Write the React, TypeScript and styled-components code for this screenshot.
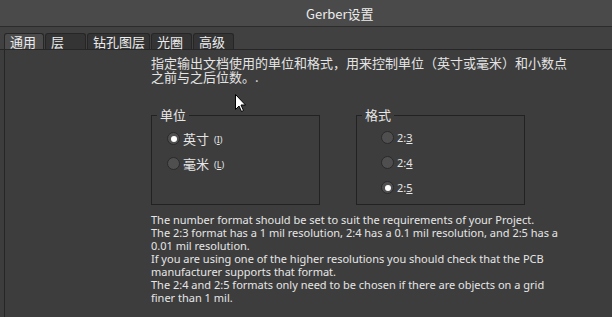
import React from "react";
import styled, { createGlobalStyle } from "styled-components";

const Global = createGlobalStyle`
  html, body { margin: 0; padding: 0; background: #3d3d3d; }
  body { font-family: "Noto Sans", "Noto Sans CJK SC", sans-serif; }
`;

const Window = styled.div`
  position: relative;
  width: 612px;
  height: 317px;
  display: flex;
  flex-direction: column;
  background: #3d3d3d;
  overflow: hidden;
  color: #e6e6e6;
  font-family: "Noto Sans", "Noto Sans CJK SC", sans-serif;
`;

const TitleBar = styled.div`
  height: 26px;
  flex: none;
  background: #4a4a4a;
  border-bottom: 1px solid #2c2c2c;
  display: flex;
  align-items: center;
  padding-left: 306px;
  font-size: 13px;
  color: #ececec;
  font-family: "Noto Sans CJK SC", sans-serif;
`;

const TabBar = styled.div`
  height: 22px;
  flex: none;
  background: #414141;
  border-bottom: 1px solid #262626;
  display: flex;
  align-items: flex-end;
  padding-left: 4px;
`;

const Tab = styled.div<{ $w: number; $active?: boolean }>`
  width: ${(p) => p.$w}px;
  height: 16px;
  box-sizing: border-box;
  margin-right: 1px;
  padding-left: 5px;
  border: 1px solid #262626;
  border-bottom: none;
  border-radius: 3px 3px 0 0;
  background: ${(p) => (p.$active ? "#4b4b4b" : "#343434")};
  font-size: 13px;
  line-height: 15px;
  color: #ececec;
  font-family: "Noto Sans CJK SC", sans-serif;
`;

const Content = styled.div`
  flex: 1;
  margin-left: 4px;
  border-left: 1px solid #262626;
  padding: 6px 0 0 146px;
  display: flex;
  flex-direction: column;
`;

const Desc = styled.div`
  width: 430px;
  font-size: 13px;
  line-height: 14px;
  color: #e4e4e4;
  font-family: "Noto Sans CJK SC", sans-serif;
`;

const Groups = styled.div`
  display: flex;
  gap: 36px;
  margin-top: 31px;
`;

const Group = styled.div`
  position: relative;
  width: 169px;
  height: 90px;
  box-sizing: border-box;
  border: 1px solid #222;
  display: flex;
  flex-direction: column;
`;

const Legend = styled.span`
  position: absolute;
  top: -9px;
  left: 5px;
  padding: 0 3px;
  background: #3d3d3d;
  font-size: 13px;
  line-height: 16px;
  color: #e6e6e6;
  font-family: "Noto Sans CJK SC", sans-serif;
`;

const RadioList = styled.div<{ $left: number; $top: number; $gap: number }>`
  display: flex;
  flex-direction: column;
  gap: ${(p) => p.$gap}px;
  padding-left: ${(p) => p.$left}px;
  padding-top: ${(p) => p.$top}px;
`;

const Row = styled.div`
  display: flex;
  align-items: center;
  height: 13px;
  gap: 3px;
`;

const Radio = styled.span<{ $on?: boolean }>`
  width: 13px;
  height: 13px;
  box-sizing: border-box;
  border-radius: 50%;
  border: 1px solid #2a2a2a;
  background: #4f4f4f;
  display: flex;
  align-items: center;
  justify-content: center;
  flex: none;
  &::after {
    content: "";
    display: ${(p) => (p.$on ? "block" : "none")};
    width: 6px;
    height: 6px;
    border-radius: 50%;
    background: #ffffff;
  }
`;

const CnLabel = styled.span`
  font-size: 13px;
  color: #e6e6e6;
  font-family: "Noto Sans CJK SC", sans-serif;
  line-height: 13px;
`;

const Key = styled.span`
  font-size: 9px;
  color: #e6e6e6;
  margin-left: 2px;
  position: relative;
  top: 1px;
`;

const FmtLabel = styled.span`
  font-size: 11px;
  color: #e6e6e6;
  line-height: 13px;
  & u {
    text-decoration-thickness: 1px;
    text-underline-offset: 1px;
  }
`;

const Body = styled.div`
  margin-top: 8px;
  font-size: 11px;
  line-height: 13px;
  color: #e6e6e6;
  white-space: nowrap;
`;

const Cursor = styled.svg`
  position: absolute;
  left: 235px;
  top: 94px;
`;

export default function App() {
  return (
    <Window>
      <Global />
      <TitleBar>Gerber设置</TitleBar>
      <TabBar>
        <Tab $w={40} $active>通用</Tab>
        <Tab $w={41}>层</Tab>
        <Tab $w={63}>钻孔图层</Tab>
        <Tab $w={41}>光圈</Tab>
        <Tab $w={41}>高级</Tab>
      </TabBar>
      <Content>
        <Desc>
          指定输出文档使用的单位和格式，用来控制单位（英寸或毫米）和小数点
          <br />
          之前与之后位数。.
        </Desc>
        <Groups>
          <Group>
            <Legend>单位</Legend>
            <RadioList $left={15} $top={16} $gap={12}>
              <Row>
                <Radio $on />
                <CnLabel>英寸</CnLabel>
                <Key>(<u>I</u>)</Key>
              </Row>
              <Row>
                <Radio />
                <CnLabel>毫米</CnLabel>
                <Key>(<u>L</u>)</Key>
              </Row>
            </RadioList>
          </Group>
          <Group>
            <Legend>格式</Legend>
            <RadioList $left={24} $top={15} $gap={12}>
              <Row>
                <Radio />
                <FmtLabel>2:<u>3</u></FmtLabel>
              </Row>
              <Row>
                <Radio />
                <FmtLabel>2:<u>4</u></FmtLabel>
              </Row>
              <Row>
                <Radio $on />
                <FmtLabel>2:<u>5</u></FmtLabel>
              </Row>
            </RadioList>
          </Group>
        </Groups>
        <Body>
          The number format should be set to suit the requirements of your Project.
          <br />
          The 2:3 format has a 1 mil resolution, 2:4 has a 0.1 mil resolution, and 2:5 has a
          <br />
          0.01 mil resolution.
          <br />
          If you are using one of the higher resolutions you should check that the PCB
          <br />
          manufacturer supports that format.
          <br />
          The 2:4 and 2:5 formats only need to be chosen if there are objects on a grid
          <br />
          finer than 1 mil.
        </Body>
      </Content>
      <Cursor width="12" height="19" viewBox="0 0 12 19">
        <path d="M0.5 0.5 L0.5 15.5 L4 12 L6.5 17.5 L8.5 16.5 L6 11 L10.5 11 Z" fill="#fff" stroke="#000" strokeWidth="1" />
      </Cursor>
    </Window>
  );
}
